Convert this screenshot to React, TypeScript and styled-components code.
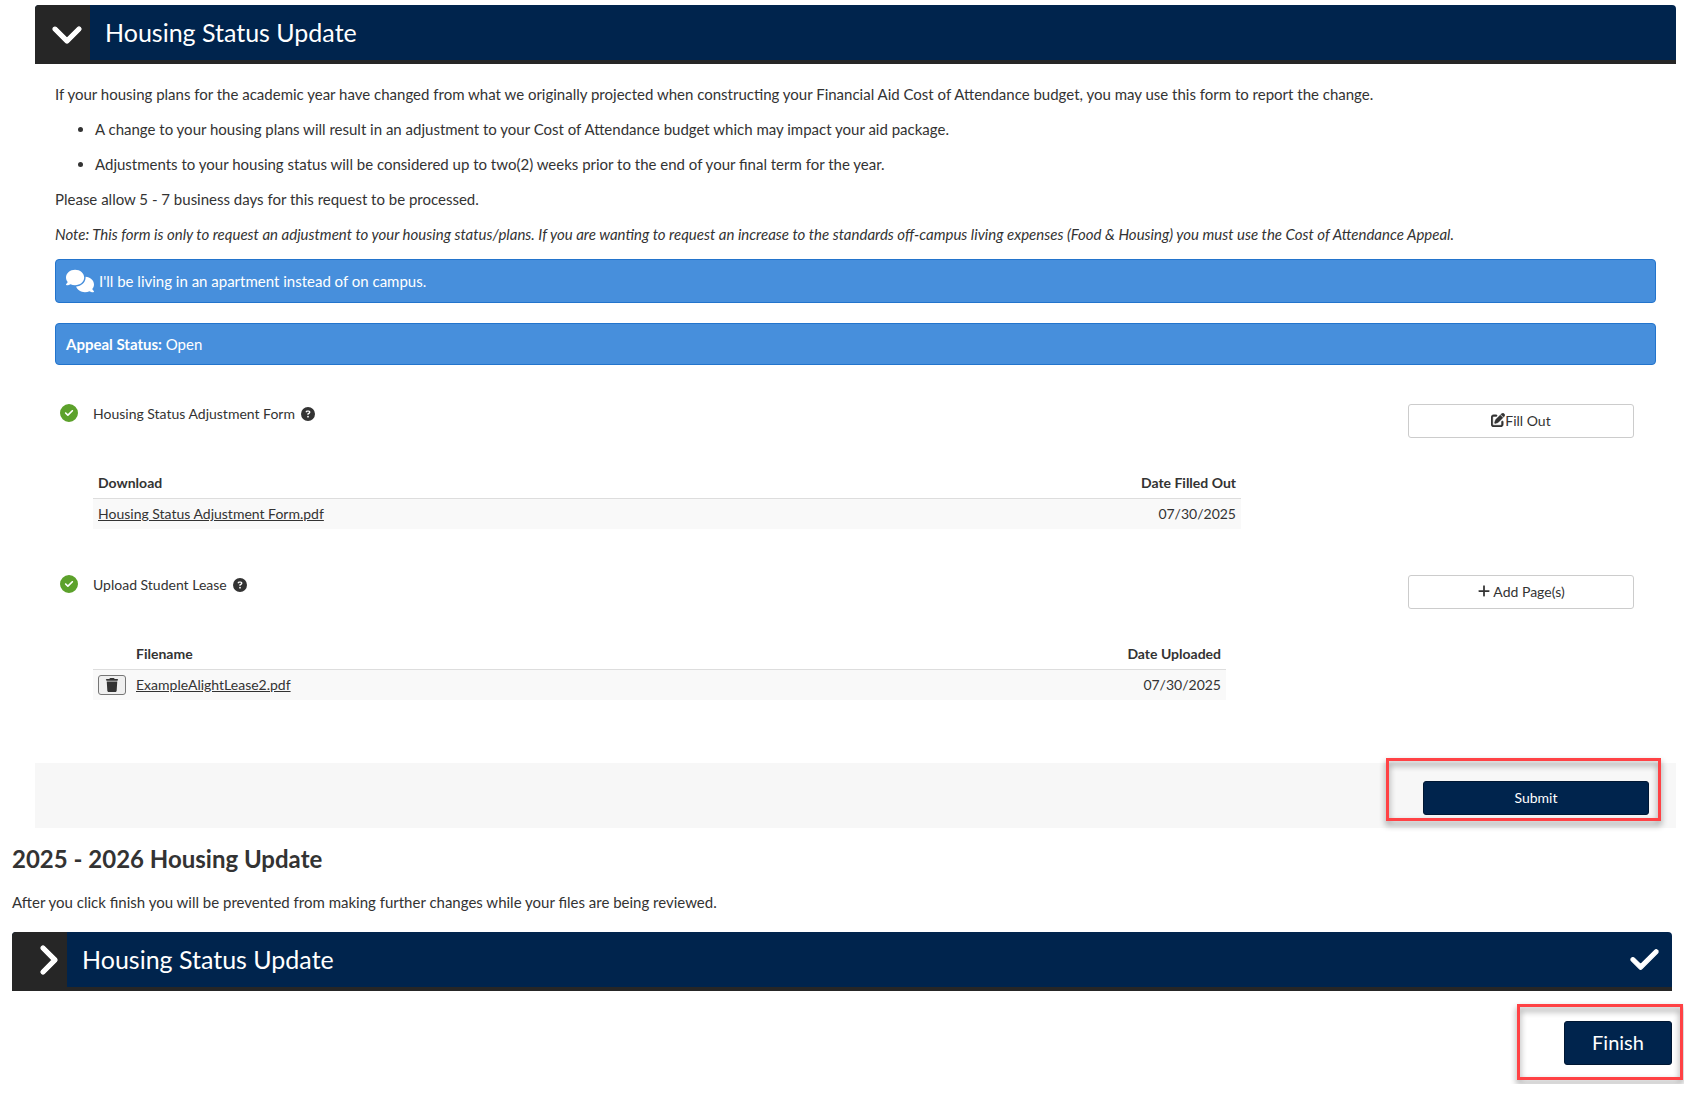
import React from "react";
import styled, { createGlobalStyle } from "styled-components";
import {
  FaCheck,
  FaChevronDown,
  FaChevronRight,
  FaCircleCheck,
  FaCircleQuestion,
  FaComments,
  FaPenToSquare,
  FaPlus,
  FaTrash,
} from "react-icons/fa6";

const GlobalStyle = createGlobalStyle`
  *, *::before, *::after { box-sizing: border-box; }
  body {
    margin: 0;
    background: #fff;
    color: #333;
    font-family: Lato, "Liberation Sans", sans-serif;
    font-size: 15px;
    line-height: 20px;
  }
  button { font-family: inherit; cursor: pointer; }
`;

const Page = styled.main`
  padding: 5px 0 19px;
`;

const OpenPanel = styled.section`
  margin: 0 8px 0 35px;
`;

const HeaderBar = styled.div`
  display: flex;
  align-items: stretch;
  height: 59px;
  overflow: hidden;
  color: #fff;
  background: #00244d;
  border-bottom: 4px solid #262626;
  border-radius: 4px 4px 0 0;

  svg { stroke: currentColor; stroke-width: 20px; overflow: visible; }
`;

const Toggle = styled.button<{ $open?: boolean }>`
  display: flex;
  align-items: center;
  justify-content: flex-end;
  width: 55px;
  padding: 0 ${(p) => (p.$open ? 7 : 4)}px 0 0;
  border: 0;
  color: #fff;
  background: #262626;
  font-size: 32px;
`;

const HeaderTitle = styled.h2`
  flex: 1;
  margin: 0;
  padding: 0 15px;
  font-size: 25px;
  font-weight: 400;
  line-height: 55px;
`;

const HeaderMark = styled.span`
  display: flex;
  align-items: center;
  padding-right: 12px;
  font-size: 31px;
`;

const PanelBody = styled.div`
  padding: 20px 20px 56px;
`;

const Text = styled.p`
  margin: 0 0 15px;
`;

const Bullets = styled.ul`
  margin: 0;
  padding-left: 40px;
`;

const Bullet = styled.li`
  margin-bottom: 15px;
`;

const Alert = styled.div`
  display: flex;
  align-items: center;
  gap: 5px;
  margin-bottom: 20px;
  padding: 9px 10px;
  min-height: 42px;
  color: #fff;
  background: #478fdc;
  border: 1px solid #2374cc;
  border-radius: 4px;

  svg { font-size: 28px; margin: -2px 0; }
`;

const Task = styled.section`
  display: grid;
  grid-template-columns: 38px minmax(0, 1fr) 226px;
  margin-top: 39px;
  padding: 0 22px 7px 0;
  font-size: 14px;
  line-height: 20px;
`;

const TaskState = styled.span`
  padding: 0 5px;
  color: #5ca12b;
  font-size: 18px;
  line-height: 0;
`;

const TaskName = styled.div`
  display: flex;
  align-items: center;
  gap: 6px;
  height: 20px;
`;

const HelpButton = styled.button`
  display: flex;
  padding: 0;
  border: 0;
  color: #333;
  background: none;
  font-size: 14px;
`;

const ActionButton = styled.button<{ $primary?: boolean; $gap?: number }>`
  display: flex;
  align-items: center;
  justify-content: center;
  gap: ${(p) => p.$gap ?? 0}px;
  width: 226px;
  height: 34px;
  padding: 0 0 2px;
  color: ${(p) => (p.$primary ? "#fff" : "#333")};
  background: ${(p) => (p.$primary ? "#00244d" : "#fff")};
  border: 1px solid ${(p) => (p.$primary ? "#001733" : "#ccc")};
  border-radius: 3px;
  font-size: 14px;
`;

const EditIcon = styled(FaPenToSquare)`
  stroke: currentColor;
  stroke-width: 16px;
`;

const FileTable = styled.table<{ $inset: number }>`
  grid-column: 2;
  width: calc(100% - ${(p) => p.$inset}px);
  margin-top: 30px;
  border-collapse: collapse;

  th, td {
    height: 30px;
    padding: 5px;
    text-align: left;
    line-height: 20px;
  }
  th { border-bottom: 1px solid #ddd; font-weight: 700; }
  td { background: #f9f9f9; }
  th:last-child, td:last-child { text-align: right; }
`;

const IconCell = styled.td`
  width: 38px;
`;

const FileLink = styled.a`
  color: #333;
  text-decoration: underline;
`;

const DeleteButton = styled.button`
  display: flex;
  align-items: center;
  justify-content: center;
  width: 28px;
  height: 20px;
  padding: 0;
  color: #333;
  background: #efefef;
  border: 1px solid #767676;
  border-radius: 3px;
  font-size: 14px;
`;

const PanelFooter = styled.footer`
  display: flex;
  justify-content: flex-end;
  padding: 18px 27px 13px;
  background: #f7f7f7;
`;

const Marked = styled.div<{ $inset: string }>`
  position: relative;

  &::after {
    content: "";
    position: absolute;
    inset: ${(p) => p.$inset};
    border: 3px solid #ff4245;
    filter: drop-shadow(0 4px 3px rgba(0, 0, 0, 0.45));
    pointer-events: none;
  }
`;

const Review = styled.section`
  margin: 0 12px;
`;

const ReviewTitle = styled.h1`
  margin: 0;
  padding: 14px 0 16px;
  font-size: 24px;
  font-weight: 700;
  line-height: 34px;
`;

const ReviewText = styled.p`
  margin: 0 0 20px;
`;

const ReviewActions = styled.div`
  display: flex;
  justify-content: flex-end;
  padding-top: 30px;
`;

const FinishButton = styled.button`
  width: 108px;
  height: 44px;
  padding: 0 0 2px;
  color: #fff;
  background: #00244d;
  border: 1px solid #001733;
  border-radius: 3px;
  font-size: 20px;
`;

export default function App() {
  return (
    <>
      <GlobalStyle />
      <Page>
        <OpenPanel>
          <HeaderBar>
            <Toggle $open aria-label="Collapse Housing Status Update" aria-expanded="true">
              <FaChevronDown />
            </Toggle>
            <HeaderTitle>Housing Status Update</HeaderTitle>
          </HeaderBar>
          <PanelBody>
            <Text>
              If your housing plans for the academic year have changed from what we originally projected when
              constructing your Financial Aid Cost of Attendance budget, you may use this form to report the change.
            </Text>
            <Bullets>
              <Bullet>
                A change to your housing plans will result in an adjustment to your Cost of Attendance budget which may
                impact your aid package.
              </Bullet>
              <Bullet>
                Adjustments to your housing status will be considered up to two(2) weeks prior to the end of your final
                term for the year.
              </Bullet>
            </Bullets>
            <Text>Please allow 5 - 7 business days for this request to be processed.</Text>
            <Text>
              <em>
                Note: This form is only to request an adjustment to your housing status/plans. If you are wanting to
                request an increase to the standards off-campus living expenses (Food &amp; Housing) you must use the
                Cost of Attendance Appeal.
              </em>
            </Text>
            <Alert>
              <FaComments aria-hidden />
              <span>I'll be living in an apartment instead of on campus.</span>
            </Alert>
            <Alert>
              <span>
                <strong>Appeal Status:</strong> Open
              </span>
            </Alert>

            <Task>
              <TaskState>
                <FaCircleCheck title="Complete" />
              </TaskState>
              <TaskName>
                Housing Status Adjustment Form
                <HelpButton aria-label="Help">
                  <FaCircleQuestion />
                </HelpButton>
              </TaskName>
              <ActionButton>
                <EditIcon />
                Fill Out
              </ActionButton>
              <FileTable $inset={167}>
                <thead>
                  <tr>
                    <th>Download</th>
                    <th>Date Filled Out</th>
                  </tr>
                </thead>
                <tbody>
                  <tr>
                    <td>
                      <FileLink href="#form">Housing Status Adjustment Form.pdf</FileLink>
                    </td>
                    <td>07/30/2025</td>
                  </tr>
                </tbody>
              </FileTable>
            </Task>

            <Task>
              <TaskState>
                <FaCircleCheck title="Complete" />
              </TaskState>
              <TaskName>
                Upload Student Lease
                <HelpButton aria-label="Help">
                  <FaCircleQuestion />
                </HelpButton>
              </TaskName>
              <ActionButton $gap={2}>
                <FaPlus />
                Add Page(s)
              </ActionButton>
              <FileTable $inset={182}>
                <thead>
                  <tr>
                    <IconCell as="th" />
                    <th>Filename</th>
                    <th>Date Uploaded</th>
                  </tr>
                </thead>
                <tbody>
                  <tr>
                    <IconCell>
                      <DeleteButton aria-label="Delete ExampleAlightLease2.pdf">
                        <FaTrash />
                      </DeleteButton>
                    </IconCell>
                    <td>
                      <FileLink href="#lease">ExampleAlightLease2.pdf</FileLink>
                    </td>
                    <td>07/30/2025</td>
                  </tr>
                </tbody>
              </FileTable>
            </Task>
          </PanelBody>
          <PanelFooter>
            <Marked $inset="-23px -12px -6px -37px">
              <ActionButton $primary>Submit</ActionButton>
            </Marked>
          </PanelFooter>
        </OpenPanel>

        <Review>
          <ReviewTitle>2025 - 2026 Housing Update</ReviewTitle>
          <ReviewText>
            After you click finish you will be prevented from making further changes while your files are being
            reviewed.
          </ReviewText>
          <HeaderBar>
            <Toggle aria-label="Expand Housing Status Update" aria-expanded="false">
              <FaChevronRight />
            </Toggle>
            <HeaderTitle>Housing Status Update</HeaderTitle>
            <HeaderMark>
              <FaCheck title="Complete" />
            </HeaderMark>
          </HeaderBar>
          <ReviewActions>
            <Marked $inset="-17px -11px -15px -47px">
              <FinishButton>Finish</FinishButton>
            </Marked>
          </ReviewActions>
        </Review>
      </Page>
    </>
  );
}
